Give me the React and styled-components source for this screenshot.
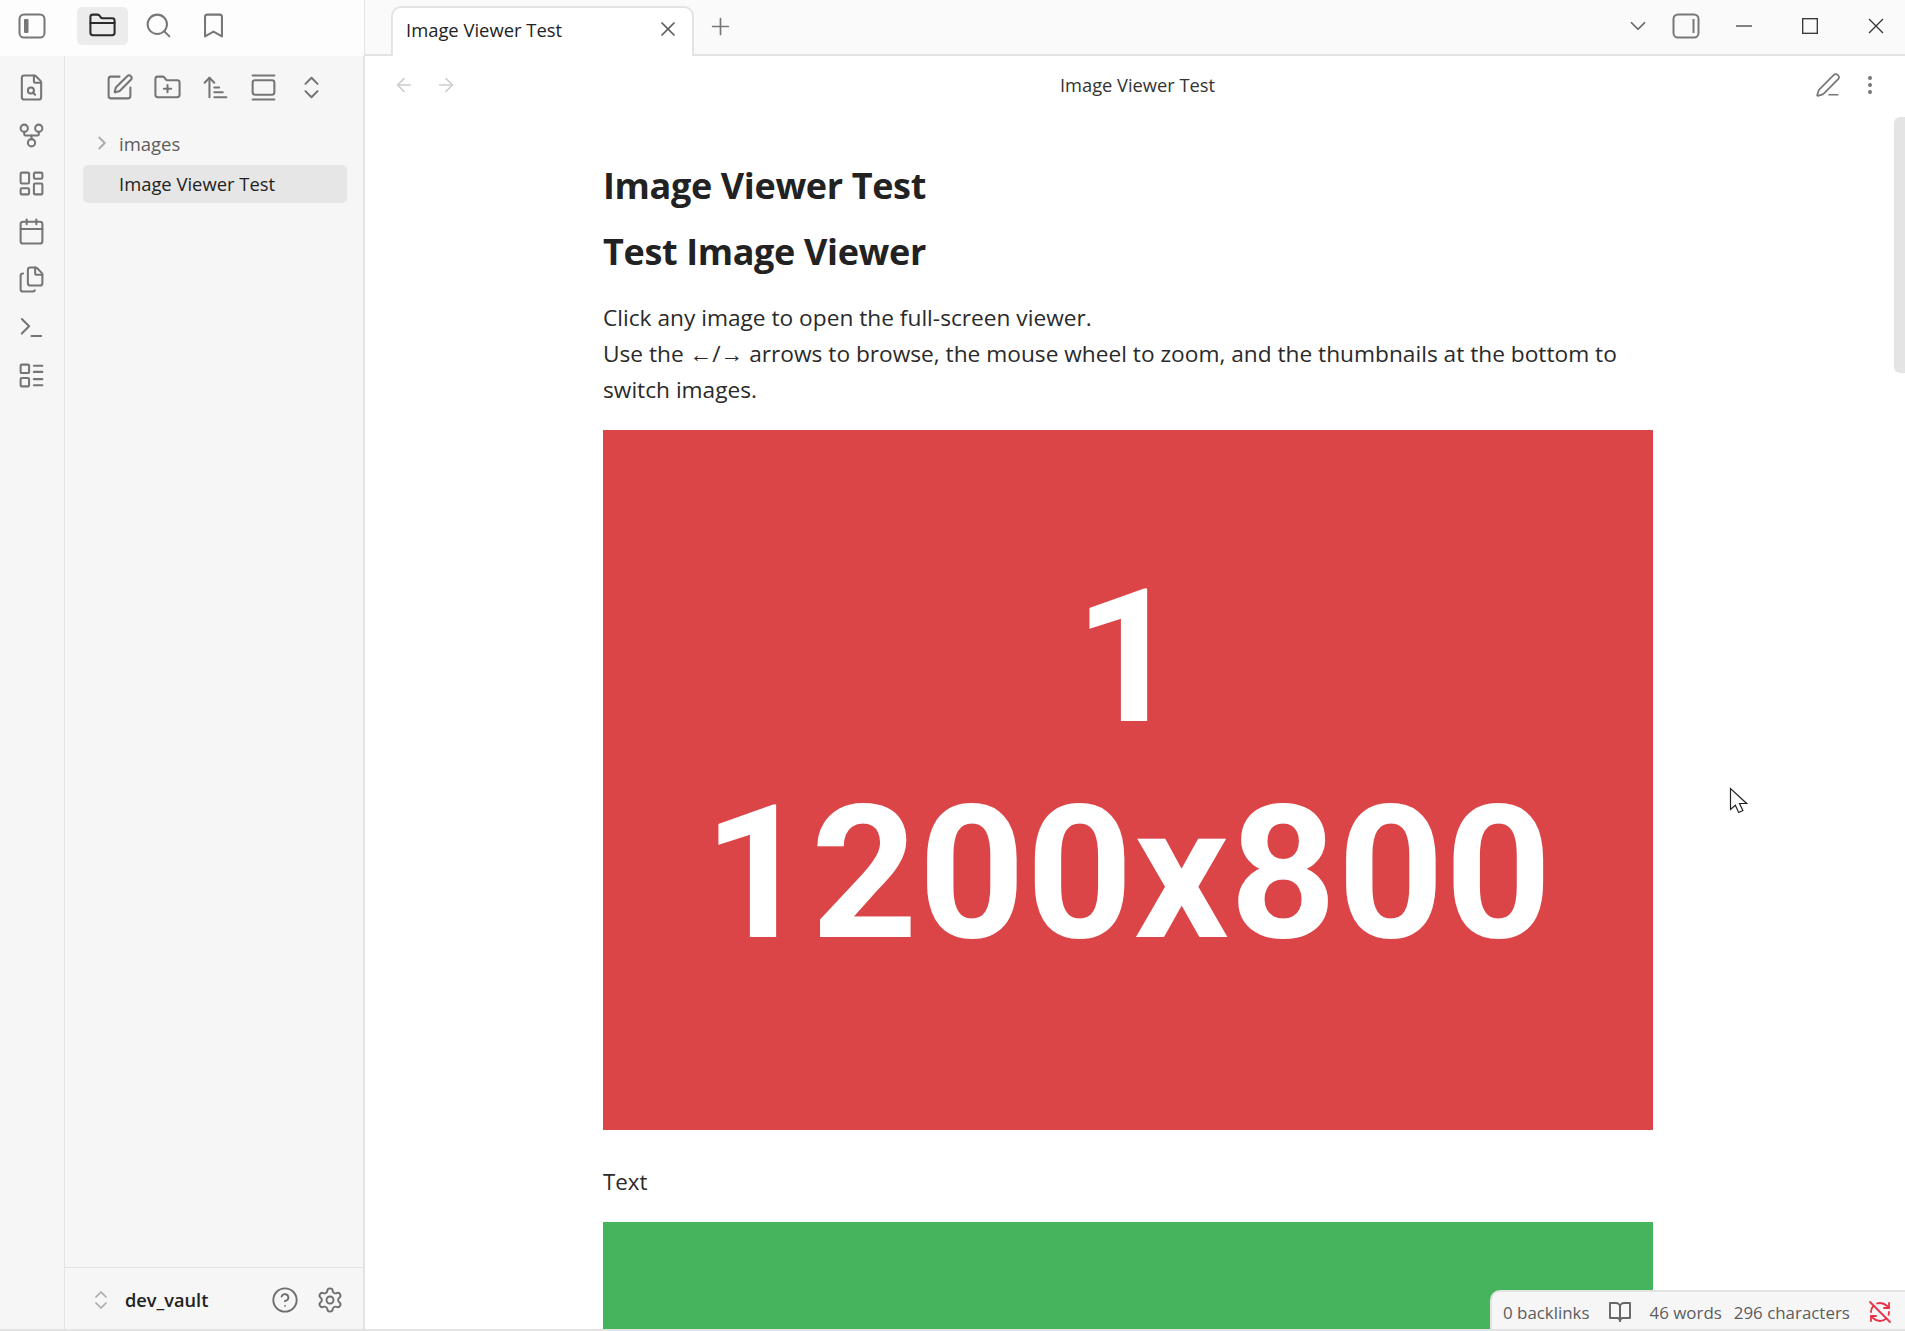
import React from 'react';
import styled, { createGlobalStyle } from 'styled-components';
import {
  ArrowLeft, ArrowRight, ArrowUpNarrowWide, Bookmark, Calendar, ChevronDown, ChevronRight,
  ChevronsUpDown, CircleHelp, EllipsisVertical, FileSearch, Files, FolderClosed, FolderPlus, GalleryVertical,
  GitFork, LayoutDashboard, LayoutList, PenLine, Plus, RefreshCwOff, Search, Settings, SquarePen, Terminal, X,
} from 'lucide-react';

const GlobalStyle = createGlobalStyle`
  html, body { margin: 0; padding: 0; height: 100%; background: #fff; }
  body { font-family: 'Open Sans', 'Noto Sans', sans-serif; color: #222; overflow: hidden; }
  * { box-sizing: border-box; }
`;

const SidebarToggle = ({ side }) => (
  <svg width="28" height="26" viewBox="0 0 28 26" fill="none">
    <rect x="1.5" y="1.5" width="25" height="23" rx="4.5" stroke="#777" strokeWidth="2" />
    {side === 'left'
      ? <rect x="6" y="6" width="4.5" height="14" rx="1" fill="#777" />
      : <rect x="20.5" y="6" width="2" height="14" fill="#777" />}
  </svg>
);

const Minimize = () => (
  <svg width="16" height="16" viewBox="0 0 16 16"><path d="M0 8h16" stroke="#333" strokeWidth="1.2" /></svg>
);
const Maximize = () => (
  <svg width="16" height="16" viewBox="0 0 16 16" fill="none"><rect x=".7" y=".7" width="14.6" height="14.6" stroke="#333" strokeWidth="1.3" /></svg>
);
const Close = () => (
  <svg width="16" height="16" viewBox="0 0 16 16"><path d="M1 1l14 14M15 1L1 15" stroke="#333" strokeWidth="1.3" /></svg>
);

const Book = () => (
  <svg width="24" height="24" viewBox="0 0 24 24" fill="none" stroke="#666" strokeWidth="1.9" strokeLinejoin="round">
    <path d="M2 3h6a4 4 0 0 1 4 4v14a3 3 0 0 0-3-3H2z" />
    <path d="M22 3h-6a4 4 0 0 0-4 4v14a3 3 0 0 1 3-3h7z" />
  </svg>
);

const Pointer = () => (
  <svg width="20" height="28" viewBox="0 0 20 28" fill="#fff">
    <path d="M1.5 1.5v21l4.8-4.2 3.4 7.2 4.2-2-3.4-7h7.2z" stroke="#222" strokeWidth="1.2" strokeLinejoin="miter" />
  </svg>
);

const App = () => {
  const icon = { size: 29, strokeWidth: 1.7 };
  return (
    <Page>
      <GlobalStyle />
      <TitleBar>
        <TopLeft>
          <ToggleSlot><SidebarToggle side="left" /></ToggleSlot>
          <TopTab active><FolderClosed {...icon} /></TopTab>
          <TopTab><Search {...icon} /></TopTab>
          <TopTab><Bookmark {...icon} /></TopTab>
        </TopLeft>
        <TabStrip>
          <Tab>
            <TabTitle>Image Viewer Test</TabTitle>
            <X size={24} strokeWidth={1.7} color="#5c5c5c" />
          </Tab>
          <NewTab><Plus size={27} strokeWidth={1.5} color="#777" /></NewTab>
        </TabStrip>
        <WindowTools>
          <MenuSlot><ChevronDown size={26} strokeWidth={1.6} color="#666" /></MenuSlot>
          <MenuSlot><SidebarToggle side="right" /></MenuSlot>
          <WindowButton><Minimize /></WindowButton>
          <WindowButton><Maximize /></WindowButton>
          <WindowButton><Close /></WindowButton>
        </WindowTools>
      </TitleBar>
      <Main>
        <Ribbon>
          <RibbonItem><FileSearch {...icon} /></RibbonItem>
          <RibbonItem><GitFork {...icon} /></RibbonItem>
          <RibbonItem><LayoutDashboard {...icon} /></RibbonItem>
          <RibbonItem><Calendar {...icon} /></RibbonItem>
          <RibbonItem><Files {...icon} /></RibbonItem>
          <RibbonItem><Terminal {...icon} /></RibbonItem>
          <RibbonItem><LayoutList {...icon} /></RibbonItem>
        </Ribbon>
        <Sidebar>
          <NavButtons>
            <NavButton><SquarePen {...icon} /></NavButton>
            <NavButton><FolderPlus {...icon} /></NavButton>
            <NavButton><ArrowUpNarrowWide {...icon} /></NavButton>
            <NavButton><GalleryVertical {...icon} /></NavButton>
            <NavButton><ChevronsUpDown {...icon} /></NavButton>
          </NavButtons>
          <Tree>
            <TreeRow>
              <TreeChevron><ChevronRight size={22} strokeWidth={2} color="#aaa" /></TreeChevron>
              <FolderName>images</FolderName>
            </TreeRow>
            <TreeRow active>
              <FileName>Image Viewer Test</FileName>
            </TreeRow>
          </Tree>
          <VaultBar>
            <VaultSwitch><ChevronsUpDown size={24} strokeWidth={1.7} color="#aaa" /></VaultSwitch>
            <VaultName>dev_vault</VaultName>
            <VaultAction><CircleHelp size={28} strokeWidth={1.6} color="#6e6e6e" /></VaultAction>
            <VaultAction><Settings size={28} strokeWidth={1.6} color="#6e6e6e" /></VaultAction>
          </VaultBar>
        </Sidebar>
        <Editor>
          <ViewHeader>
            <HistoryNav>
              <ArrowLeft size={22} strokeWidth={1.7} color="#ccc" />
              <ArrowRight size={22} strokeWidth={1.7} color="#ccc" />
            </HistoryNav>
            <ViewTitle>Image Viewer Test</ViewTitle>
            <ViewActions>
              <PenLine size={26} strokeWidth={1.6} color="#777" />
              <EllipsisVertical size={24} strokeWidth={2} color="#777" />
            </ViewActions>
          </ViewHeader>
          <Scroller>
            <Doc>
              <Heading>Image Viewer Test</Heading>
              <Heading>Test Image Viewer</Heading>
              <Para>
                Click any image to open the full-screen viewer.<br />
                Use the ←/→ arrows to browse, the mouse wheel to zoom, and the thumbnails at the bottom to switch images.
              </Para>
              <Placeholder color="#dc4548">
                <span>1</span>
                <span>1200x800</span>
              </Placeholder>
              <PlainText>Text</PlainText>
              <Placeholder color="#45b45c" />
            </Doc>
          </Scroller>
          <ScrollThumb />
          <StatusBar>
            <StatusItem>0 backlinks</StatusItem>
            <StatusIcon><Book /></StatusIcon>
            <StatusItem>46 words</StatusItem>
            <StatusItem>296 characters</StatusItem>
            <StatusSync><RefreshCwOff size={24} strokeWidth={1.8} color="#e93147" /></StatusSync>
          </StatusBar>
          <MousePointer><Pointer /></MousePointer>
        </Editor>
      </Main>
    </Page>
  );
};

const Page = styled.div`
  height: 100vh;
  display: flex;
  flex-direction: column;
  overflow: hidden;
  border-bottom: 2px solid #e3e3e3;
`;

const TitleBar = styled.header`
  height: 56px;
  flex: none;
  display: flex;
  background: #fafafa;
  border-bottom: 2px solid #e3e3e3;
`;

const TopLeft = styled.div`
  width: 365px;
  flex: none;
  display: flex;
  align-items: center;
  padding: 0 0 5px 0;
  background: #fdfdfd;
  border-right: 1px solid #e3e3e3;
  margin-bottom: -2px;
`;

const ToggleSlot = styled.div`
  width: 64px;
  margin-right: 13px;
  display: flex;
  justify-content: center;
`;

const TopTab = styled.div`
  width: 51px;
  height: 38px;
  margin-right: 4.5px;
  display: flex;
  align-items: center;
  justify-content: center;
  border-radius: 5px;
  background: ${p => (p.active ? '#ececec' : 'transparent')};
  color: ${p => (p.active ? '#2a2a2a' : '#777')};
`;

const TabStrip = styled.div`
  flex: 1;
  display: flex;
  align-items: flex-end;
  padding-left: 26px;
`;

const Tab = styled.div`
  width: 303px;
  height: 50px;
  margin-bottom: -2px;
  display: flex;
  align-items: center;
  justify-content: space-between;
  padding: 0 12px 6px 13px;
  background: #fff;
  border: 2px solid #e3e3e3;
  border-bottom: none;
  border-radius: 10px 10px 0 0;
`;

const TabTitle = styled.span`
  font-size: 18.4px;
  color: #222;
`;

const NewTab = styled.div`
  width: 52px;
  height: 50px;
  padding-bottom: 5px;
  display: flex;
  align-items: center;
  justify-content: center;
`;

const WindowTools = styled.div`
  display: flex;
  align-items: center;
  padding-bottom: 2px;
  margin-right: -4px;
`;

const MenuSlot = styled.div`
  width: 48px;
  display: flex;
  justify-content: center;
  &:nth-child(2) { margin-right: 1px; }
`;

const WindowButton = styled.div`
  width: 66px;
  display: flex;
  justify-content: center;
`;

const Main = styled.div`
  flex: 1;
  min-height: 0;
  display: flex;
`;

const Ribbon = styled.nav`
  width: 65px;
  flex: none;
  display: flex;
  flex-direction: column;
  padding: 7px 2px 0 0;
  background: #f6f6f6;
  border-right: 1px solid #e3e3e3;
`;

const RibbonItem = styled.div`
  height: 48px;
  display: flex;
  align-items: center;
  justify-content: center;
  color: #757575;
`;

const Sidebar = styled.aside`
  width: 300px;
  flex: none;
  display: flex;
  flex-direction: column;
  background: #f6f6f6;
  border-right: 2px solid #e3e3e3;
`;

const NavButtons = styled.div`
  display: flex;
  justify-content: center;
  padding: 7px 0 0 2px;
`;

const NavButton = styled.div`
  width: 48px;
  height: 48px;
  display: flex;
  align-items: center;
  justify-content: center;
  color: #757575;
`;

const Tree = styled.div`
  display: flex;
  flex-direction: column;
  gap: 2px;
  padding: 14px 16px 0 18px;
`;

const TreeRow = styled.div`
  height: 38px;
  display: flex;
  align-items: center;
  padding: 0 0 2px 36px;
  border-radius: 5px;
  background: ${p => (p.active ? '#e6e6e6' : 'transparent')};
`;

const TreeChevron = styled.span`
  width: 28px;
  margin-left: -28px;
  display: flex;
`;

const FolderName = styled.span`
  font-size: 18.5px;
  color: #5c5c5c;
`;

const FileName = styled.span`
  font-size: 18.4px;
  color: #222;
`;

const VaultBar = styled.div`
  margin-top: auto;
  height: 62px;
  display: flex;
  align-items: center;
  padding: 2px 19px 0 24px;
  border-top: 1px solid #e3e3e3;
`;

const VaultSwitch = styled.span`
  display: flex;
  margin-right: 12px;
`;

const VaultName = styled.span`
  flex: 1;
  font-size: 18.2px;
  font-weight: 600;
  color: #222;
`;

const VaultAction = styled.span`
  display: flex;
  margin-left: 17px;
`;

const Editor = styled.main`
  flex: 1;
  min-width: 0;
  position: relative;
  display: flex;
  flex-direction: column;
  background: #fff;
`;

const ViewHeader = styled.div`
  height: 57px;
  flex: none;
  display: flex;
  align-items: center;
  padding: 0 23px 0 28px;
`;

const HistoryNav = styled.div`
  display: flex;
  gap: 20px;
  width: 200px;
`;

const ViewTitle = styled.div`
  flex: 1;
  text-align: center;
  font-size: 18.3px;
  color: #333;
`;

const ViewActions = styled.div`
  width: 200px;
  display: flex;
  justify-content: flex-end;
  align-items: center;
  gap: 17px;
`;

const Scroller = styled.div`
  flex: 1;
  min-height: 0;
  overflow: hidden;
  padding-right: 14px;
`;

const Doc = styled.article`
  width: 1050px;
  margin: 0 auto;
  padding-top: 40px;
`;

const Heading = styled.h1`
  margin: 0;
  font-size: 36px;
  font-weight: 700;
  letter-spacing: -0.36px;
  line-height: 66px;
  color: #222;
`;

const Para = styled.p`
  margin: 15px 0 22px;
  font-size: 22.7px;
  line-height: 36px;
  color: #2a2a2a;
`;

const Placeholder = styled.div`
  height: 700px;
  padding-bottom: 31px;
  display: flex;
  flex-direction: column;
  align-items: center;
  justify-content: center;
  background: ${p => p.color};
  color: #fff;
  font-family: Roboto, 'Liberation Sans', sans-serif;
  font-weight: 700;
  font-size: 186px;
  letter-spacing: 1px;
  line-height: 216px;
`;

const PlainText = styled.p`
  margin: 34px 0 22px;
  font-size: 22.3px;
  line-height: 36px;
  color: #2a2a2a;
`;

const ScrollThumb = styled.div`
  position: absolute;
  top: 61px;
  right: 0;
  width: 11px;
  height: 256px;
  background: #e4e4e4;
  border-radius: 6px 0 0 6px;
`;

const StatusBar = styled.footer`
  position: absolute;
  right: 0;
  bottom: 0;
  height: 39px;
  width: 415px;
  display: flex;
  align-items: center;
  padding: 3px 13px 0 11px;
  background: #f6f6f6;
  border-top: 2px solid #e3e3e3;
  border-left: 2px solid #e3e3e3;
  border-top-left-radius: 10px;
  color: #5c5c5c;
`;

const StatusItem = styled.span`
  font-size: 16.9px;
  margin-right: 12px;
`;

const StatusIcon = styled.span`
  display: flex;
  margin: 0 18px 0 6px;
`;

const StatusSync = styled.span`
  display: flex;
  margin-left: auto;
`;

const MousePointer = styled.div`
  position: absolute;
  left: 1364px;
  top: 731px;
`;

export default App;
